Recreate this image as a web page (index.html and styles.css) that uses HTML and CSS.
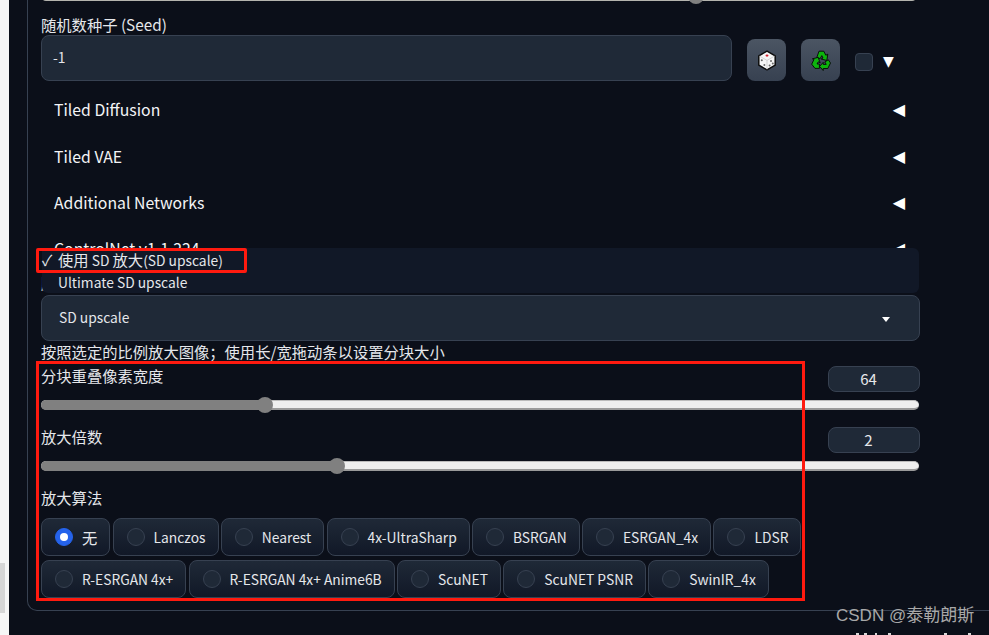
FILE: index.html
```html
<!DOCTYPE html>
<html lang="zh">
<head>
<meta charset="utf-8">
<title>SD upscale</title>
<link rel="stylesheet" href="styles.css">
</head>
<body>
<div class="page">
  <aside class="strip"><div class="strip-block"></div></aside>
  <main class="main">
    <section class="panel">
      <div class="track-top"><span class="thumb-top"></span></div>
      <label class="label seed-label">随机数种子 (Seed)</label>
      <div class="seed-row">
        <div class="field seed-input">-1</div>
        <button class="tool">
          <svg width="20" height="21" viewBox="0 0 20 21">
            <path d="M10 1.2 18.2 5.8v9.4L10 19.8 1.8 15.2V5.8z" fill="#f6f6f6" stroke="#0c0c0c" stroke-width="1.5" stroke-linejoin="round"/>
            <path d="M2.6 6.2 10 10.4l7.4-4.2M10 10.4v9" fill="none" stroke="#c4c4c4" stroke-width=".7"/>
            <ellipse cx="10" cy="5.6" rx="1.5" ry="1.1" fill="#d3222f"/>
            <g fill="#6a6a6a"><circle cx="4.8" cy="10.2" r="1"/><circle cx="7.4" cy="15" r="1"/><circle cx="14" cy="11" r="1"/><circle cx="15.8" cy="13.6" r="1"/><circle cx="12.6" cy="15.6" r="1"/></g>
          </svg>
        </button>
        <button class="tool">
          <svg width="20" height="21" viewBox="0 0 20 21">
            <g fill="#0db40d" stroke="#060606" stroke-width=".9" stroke-linejoin="round">
              <path d="M5.800 7.500 8 1.200h4.800l2 4 2-1-1 6.300-5.600-1.500 1.800-1-1.200-2.400L9.200 8.600z"/>
              <path d="M.7 14.200 3 9.400 1.400 8.800 7.200 7.400 9.200 12.800 7.300 11.800 6 14H8.400v4.400H4z"/>
              <path d="M19.500 13 16.800 18.500H12.200v2L8.600 16.400 12.200 12.400v2H15.200L13.800 12 17.300 9.800z"/>
            </g>
          </svg>
        </button>
        <span class="check"></span>
        <span class="down-glyph">▼</span>
      </div>

      <div class="acc">Tiled Diffusion<span class="tri">◀</span></div>
      <div class="acc">Tiled VAE<span class="tri">◀</span></div>
      <div class="acc">Additional Networks<span class="tri">◀</span></div>
      <div class="acc">ControlNet v1.1.224<span class="tri">◀</span></div>

      <label class="label script-label">脚本</label>
      <div class="field select">SD upscale<span class="caret"></span></div>
      <p class="label info">按照选定的比例放大图像；使用长/宽拖动条以设置分块大小</p>

      <div class="slider-block">
        <div class="slider-head"><span class="label">分块重叠像素宽度</span><span class="num">64</span></div>
        <div class="track"><div class="fill" style="width:224px"></div><span class="thumb" style="left:216px"></span></div>
      </div>
      <div class="slider-block">
        <div class="slider-head"><span class="label">放大倍数</span><span class="num">2</span></div>
        <div class="track"><div class="fill" style="width:296px"></div><span class="thumb" style="left:288px"></span></div>
      </div>

      <label class="label algo-label">放大算法</label>
      <div class="radios">
        <span class="radio"><i class="dot on"></i><span class="cjk">无</span></span>
        <span class="radio"><i class="dot"></i>Lanczos</span>
        <span class="radio"><i class="dot"></i>Nearest</span>
        <span class="radio"><i class="dot"></i>4x-UltraSharp</span>
        <span class="radio"><i class="dot"></i>BSRGAN</span>
        <span class="radio"><i class="dot"></i>ESRGAN_4x</span>
        <span class="radio"><i class="dot"></i>LDSR</span>
        <span class="radio"><i class="dot"></i>R-ESRGAN 4x+</span>
        <span class="radio"><i class="dot"></i>R-ESRGAN 4x+ Anime6B</span>
        <span class="radio"><i class="dot"></i>ScuNET</span>
        <span class="radio"><i class="dot"></i>ScuNET PSNR</span>
        <span class="radio"><i class="dot"></i>SwinIR_4x</span>
      </div>

      <ul class="menu">
        <li class="menu-item"><span class="tick">✓</span><span class="menu-text"><span class="cjk">使用</span> SD <span class="cjk">放大</span>(SD upscale)</span></li>
        <li class="menu-item"><span class="tick"></span><span class="menu-text">Ultimate SD upscale</span></li>
      </ul>
    </section>
  </main>
</div>
<div class="mark mark-menu"></div>
<div class="mark mark-params"></div>
<div class="watermark">CSDN @泰勒朗斯</div>
<svg class="clipped" width="120" height="2" viewBox="0 0 120 2"><g fill="#d8d8d8"><rect x="0" width="3" height="2"/><rect x="8" width="3" height="2"/><rect x="19" width="2" height="2"/><rect x="32" width="3" height="2"/><rect x="88" width="3" height="2"/><rect x="112" width="3" height="2"/></g></svg>
</body>
</html>
```
FILE: styles.css
```css
* { box-sizing: border-box; }
html, body { margin: 0; padding: 0; height: 635px; overflow: hidden; background: #0b0f19; }
body { position: relative; font-family: "Noto Sans CJK SC", "Noto Sans", sans-serif; font-size: 13.8px; color: #e5e7eb; }
.page { display: flex; height: 635px; }
.strip { width: 9px; flex: none; background: #f6f6f6; padding-top: 563px; }
.strip-block { width: 5px; height: 50px; background: #d6d6d6; }
.main { flex: 1; padding-left: 18px; background: #0b0f19; }
.panel { display: flow-root; position: relative; height: 611px; padding: 0 69px 0 13px; border-left: 1px solid #374151; border-bottom: 1px solid #374151; border-bottom-left-radius: 10px; }
.cjk { font-size: 15.3px; }

.track-top { position: relative; height: 10px; margin-top: -9px; width: 876px; background: #b4b4ae; border-radius: 5px; }
.thumb-top { position: absolute; left: 647px; top: -3px; width: 16px; height: 16px; border-radius: 50%; background: #808080; }

.label { display: block; margin: 0; font-size: 15.3px; line-height: 20px; color: #e5e7eb; }
.seed-label { margin-top: 14px; line-height: 19px; height: 20px; }
.seed-row { display: flex; align-items: flex-end; height: 46px; }
.field { background: #1f2937; border: 1px solid #374151; border-radius: 8px; }
.seed-input { width: 691px; height: 46px; padding: 0 11px; line-height: 42px; }
.tool { width: 39px; height: 42px; margin-left: 15px; padding: 0; display: flex; align-items: center; justify-content: center; border: 0; border-radius: 8px; background: linear-gradient(to bottom, #4b5563, #374151); }
.check { width: 18px; height: 18px; margin: 0 0 10px 15px; background: #1f2937; border: 1px solid #374151; border-radius: 4px; }
.down-glyph { margin: 0 0 8px 10px; font-family: "DejaVu Sans", sans-serif; font-size: 14px; line-height: 24px; color: #fff; }

.acc { display: flex; justify-content: space-between; align-items: center; height: 46.4px; padding: 0 15px 0 13px; font-size: 15.8px; color: #f3f4f6; }
.seed-row + .acc { margin-top: 5.5px; }
.tri { font-family: "DejaVu Sans", sans-serif; font-size: 16px; line-height: 22px; margin-top: 1px; color: #fff; }

.script-label { margin-top: 2.9px; height: 20px; line-height: 15px; overflow: hidden; }
.select { position: relative; height: 46px; width: 879px; padding: 0 17px; line-height: 42px; }
.caret { position: absolute; right: 29px; top: 21px; width: 0; height: 0; border-left: 4px solid transparent; border-right: 4px solid transparent; border-top: 5px solid #fff; }
.info { margin-top: 1px; height: 21px; line-height: 19px; width: 879px; }

.slider-block { width: 879px; height: 61px; margin-top: 0; }
.info + .slider-block { margin-top: 3px; }
.slider-head { display: flex; justify-content: space-between; align-items: flex-start; height: 34px; }
.slider-head .label { line-height: 18px; }
.num { width: 92px; height: 26px; padding-right: 11px; font-size: 15px; line-height: 24px; text-align: center; background: #1f2937; border: 1px solid #374151; border-radius: 8px; }
.track { position: relative; width: 878px; height: 10px; background: #eee; border-bottom: 2px solid #9a9a9a; border-top: 1px solid #bbb; border-radius: 5px; }
.fill { position: absolute; left: 0; top: -1px; bottom: -2px; background: #808080; border-radius: 5px 0 0 5px; }
.thumb { position: absolute; top: -4px; width: 16px; height: 16px; border-radius: 50%; background: #808080; }

.algo-label { margin-top: 0; height: 20px; line-height: 18px; }
.radios { display: flex; flex-wrap: wrap; gap: 4px 2.3px; width: 879px; margin-top: 10px; }
.radio { display: flex; align-items: center; height: 38px; padding: 0 12px 0 13px; gap: 9px; background: linear-gradient(to bottom, #1f2937, #111827); border: 1px solid #374151; border-radius: 8px; line-height: 20px; white-space: nowrap; }
.dot { display: block; width: 18px; height: 18px; background: #1f2937; border: 1px solid #374151; border-radius: 50%; }
.dot.on { background: #2563eb; border-color: #2563eb; position: relative; }
.dot.on::after { content: ""; position: absolute; left: 4px; top: 4px; width: 8px; height: 8px; border-radius: 50%; background: #fff; }

.menu { position: absolute; left: 14px; top: 248px; width: 877px; height: 45px; margin: 0; padding: 0; list-style: none; background: #111827; border-radius: 0 6px 6px 6px; }
.menu-item { display: flex; align-items: center; height: 23px; line-height: 23px; color: #e5e7eb; }
.tick { display: block; width: 16px; font-size: 15px; text-align: left; }

.mark { position: absolute; border: 3px solid #ff1a0f; }
.mark-menu { left: 36px; top: 248px; width: 211px; height: 25px; border-radius: 2px; }
.mark-params { left: 36px; top: 361px; width: 769px; height: 240px; }
.watermark { position: absolute; left: 836px; top: 605px; font-family: "Liberation Sans", "Noto Sans CJK SC", sans-serif; font-size: 17px; line-height: 22px; color: #a8a8a8; white-space: nowrap; }
.clipped { position: absolute; left: 856px; top: 633px; }
```
